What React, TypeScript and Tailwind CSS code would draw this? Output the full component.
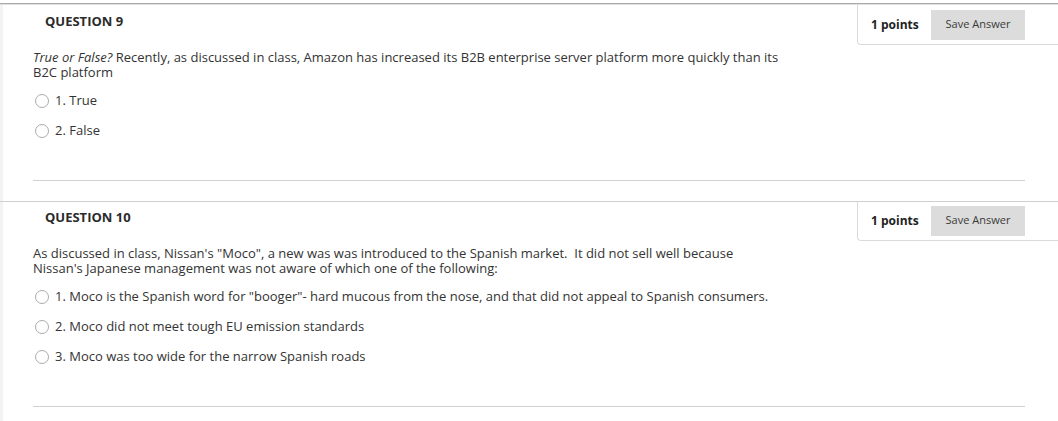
const FONT = { fontFamily: '"Open Sans", "Liberation Sans", sans-serif' };

type Question = {
    num: number;
    prompt: React.ReactNode;
    options: string[];
};

const QUESTIONS: Question[] = [
    {
        num: 9,
        prompt: (
            <>
                <em>True or False?</em> Recently, as discussed in class, Amazon has increased its B2B enterprise server
                platform more quickly than its B2C platform
            </>
        ),
        options: ['1. True', '2. False'],
    },
    {
        num: 10,
        prompt: (
            <>
                As discussed in class, Nissan's "Moco", a new was was introduced to the Spanish market.&nbsp; It did not
                sell well because Nissan's Japanese management was not aware of which one of the following:
            </>
        ),
        options: [
            '1. Moco is the Spanish word for "booger"- hard mucous from the nose, and that did not appeal to Spanish consumers.',
            '2. Moco did not meet tough EU emission standards',
            '3. Moco was too wide for the narrow Spanish roads',
        ],
    },
];

function QuestionBlock({ q, first }: { q: Question; first: boolean }) {
    return (
        <section>
            {/* top rule */}
            {first ? (
                <>
                    <div className="h-px bg-[#a9a9a9]" />
                    <div className="h-px bg-[#e0e0e0]" />
                </>
            ) : (
                <div className="h-px bg-[#cfcfcf]" />
            )}
            <div className="flex">
                <div className="w-[3px] shrink-0 bg-[#f3f3f3]" />
                <div className="flex-1 min-w-0">
                    {/* header */}
                    <div className={`flex items-start justify-between h-[40px] ${first ? '' : '-mt-px'}`}>
                        <h2 className="pl-[42px] pt-[8px] text-[13px] leading-[16px] font-bold uppercase text-[#2b2b2b]">
                            Question {q.num}
                        </h2>
                        <div className="flex items-center justify-between h-[40px] w-[201px] pl-[13px] pr-[33px] border-l border-b border-[#dadada] rounded-bl-[4px]">
                            <span className="text-[12px] font-bold text-[#222] whitespace-nowrap">1 points</span>
                            <button className="h-[30px] w-[94px] bg-[#dcdcdc] text-[11px] text-[#3a3a3a] whitespace-nowrap">
                                Save Answer
                            </button>
                        </div>
                    </div>

                    {/* prompt */}
                    <p className="mt-[5px] pl-[30px] w-[782px] text-[13px] leading-[15px] text-[#333]">{q.prompt}</p>

                    {/* options */}
                    <ul className="mt-[6px] pl-[32px]">
                        {q.options.map(o => (
                            <li key={o} className="flex items-center h-[30px]">
                                <span className="w-[14px] h-[14px] rounded-full border border-[#ababab] bg-white shrink-0" />
                                <span className="ml-[6px] text-[13px] text-[#333] whitespace-nowrap">{o}</span>
                            </li>
                        ))}
                    </ul>

                    {/* bottom rule */}
                    <div className="mt-[34px] ml-[30px] w-[992px] h-px bg-[#d0d0d0]" />
                    <div className="h-[20px]" />
                </div>
            </div>
        </section>
    );
}

export default function App() {
    return (
        <div className="w-[1058px] h-[421px] overflow-hidden bg-white" style={FONT}>
            <div className="h-[3px]" />
            {QUESTIONS.map((q, i) => (
                <QuestionBlock key={q.num} q={q} first={i === 0} />
            ))}
        </div>
    );
}
